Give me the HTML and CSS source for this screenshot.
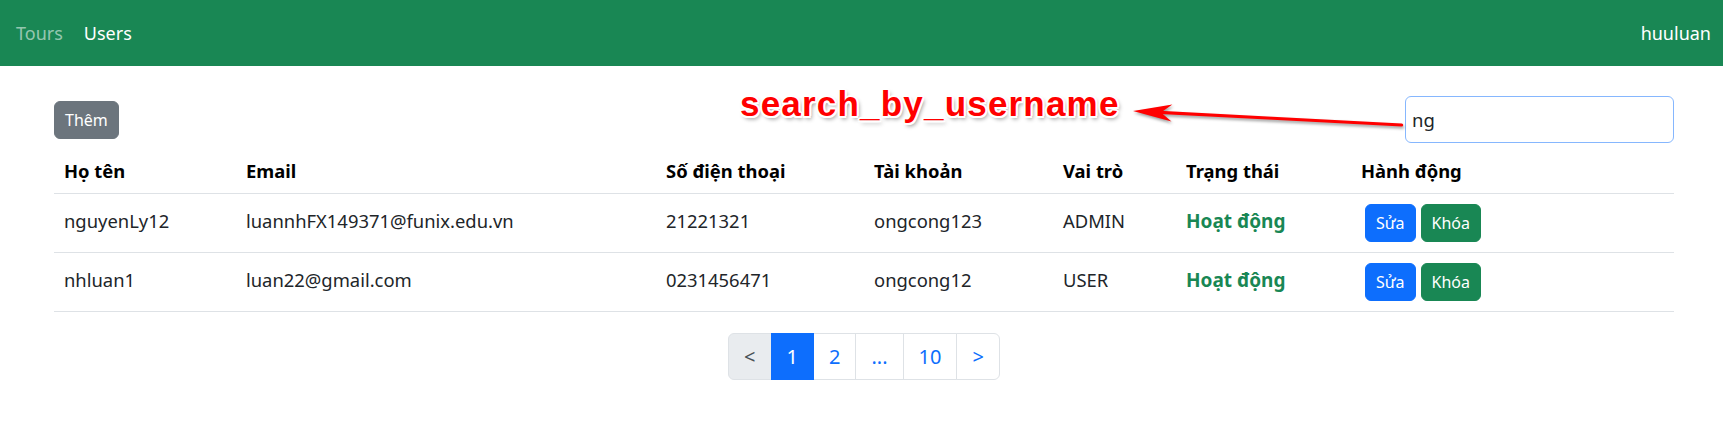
FILE: index.html
```html
<!DOCTYPE html>
<html lang="vi">
<head>
<meta charset="utf-8">
<title>Users</title>
<link rel="stylesheet" href="styles.css">
</head>
<body>
<nav class="navbar">
  <div class="nav-left">
    <a class="nav-link muted" href="#">Tours</a>
    <a class="nav-link" href="#">Users</a>
  </div>
  <div class="nav-user">huuluan</div>
</nav>

<main class="content">
  <div class="toolbar">
    <button class="btn btn-secondary">Thêm</button>
    <input class="search" type="text" value="ng">
  </div>

  <table class="table">
    <colgroup>
      <col class="c1"><col class="c2"><col class="c3"><col class="c4"><col class="c5"><col class="c6"><col class="c7">
    </colgroup>
    <thead>
      <tr>
        <th>Họ tên</th>
        <th>Email</th>
        <th>Số điện thoại</th>
        <th>Tài khoản</th>
        <th>Vai trò</th>
        <th>Trạng thái</th>
        <th>Hành động</th>
      </tr>
    </thead>
    <tbody>
      <tr>
        <td>nguyenLy12</td>
        <td>luannhFX149371@funix.edu.vn</td>
        <td>21221321</td>
        <td>ongcong123</td>
        <td>ADMIN</td>
        <td class="status">Hoạt động</td>
        <td><div class="actions"><button class="btn btn-primary">Sửa</button><button class="btn btn-success">Khóa</button></div></td>
      </tr>
      <tr>
        <td>nhluan1</td>
        <td>luan22@gmail.com</td>
        <td>0231456471</td>
        <td>ongcong12</td>
        <td>USER</td>
        <td class="status">Hoạt động</td>
        <td><div class="actions"><button class="btn btn-primary">Sửa</button><button class="btn btn-success">Khóa</button></div></td>
      </tr>
    </tbody>
  </table>

  <div class="pager-wrap">
    <ul class="pagination">
      <li class="page-item prev">&lt;</li>
      <li class="page-item active">1</li>
      <li class="page-item">2</li>
      <li class="page-item">...</li>
      <li class="page-item">10</li>
      <li class="page-item">&gt;</li>
    </ul>
  </div>
</main>

<div class="annotation">search_by_username</div>
<svg class="arrow" width="330" height="50" viewBox="1100 90 330 50" xmlns="http://www.w3.org/2000/svg">
  <g transform="rotate(2.98 1133 111)">
    <line x1="1150" y1="111" x2="1402" y2="111" stroke="#ff0000" stroke-width="3.2" stroke-linecap="round"/>
    <polygon points="1133,111 1172,102.5 1161,111 1172,119.5" fill="#ff0000"/>
  </g>
</svg>
</body>
</html>
```

FILE: styles.css
```css
* { box-sizing: border-box; }

body {
  margin: 0;
  font-family: "Noto Sans", "Open Sans", sans-serif;
  font-size: 16px;
  line-height: 24px;
  color: #212529;
  background: #fff;
}

.navbar {
  height: 66px;
  background: #198754;
  display: flex;
  align-items: center;
  justify-content: space-between;
  padding: 0 12px 0 16px;
  font-size: 18px;
  line-height: 28px;
}

.nav-left {
  display: flex;
  gap: 21px;
}

.nav-link {
  color: #fff;
  text-decoration: none;
}

.nav-link.muted {
  color: rgba(255, 255, 255, 0.55);
}

.nav-user {
  color: #fff;
}

.content {
  padding: 30px 49px 0 54px;
}

.toolbar {
  display: flex;
  justify-content: space-between;
  align-items: center;
}

.btn {
  font-family: inherit;
  font-size: 16px;
  line-height: 24px;
  padding: 6px 10px;
  border: 1px solid transparent;
  border-radius: 6px;
  color: #fff;
  cursor: pointer;
}

.btn-secondary { background: #6c757d; border-color: #6c757d; }
.btn-primary { background: #0d6efd; border-color: #0d6efd; }
.btn-success { background: #198754; border-color: #198754; }

.search {
  width: 269px;
  height: 47px;
  border: 1px solid #86b7fe;
  border-radius: 6px;
  padding: 0 6px;
  font-family: inherit;
  font-size: 18.5px;
  color: #212529;
  outline: none;
}

.table {
  width: 100%;
  border-collapse: collapse;
  table-layout: fixed;
  margin-top: 6px;
}

.c1 { width: 182px; }
.c2 { width: 420px; }
.c3 { width: 208px; }
.c4 { width: 189px; }
.c5 { width: 123px; }
.c6 { width: 175px; }
.c7 { width: 323px; }

.table th,
.table td {
  padding: 10px;
  text-align: left;
  vertical-align: middle;
  border-bottom: 1px solid #dee2e6;
  white-space: nowrap;
  font-size: 18.4px;
  line-height: 24px;
}

.table th {
  font-weight: 700;
  color: #000;
}

.table td {
  padding-bottom: 12px;
  padding-top: 8px;
}

.table td.status {
  color: #198754;
  font-weight: 700;
  font-size: 19px;
}

.actions {
  display: flex;
  gap: 5px;
  padding-left: 4px;
  padding-top: 2px;
}

.actions .btn {
  margin-bottom: -2px;
}

.pager-wrap {
  display: flex;
  justify-content: center;
  margin-top: 21px;
}

.pagination {
  display: flex;
  list-style: none;
  margin: 0;
  padding: 0;
}

.page-item {
  font-size: 20px;
  line-height: 29px;
  padding: 8px 15px;
  border: 1px solid #dee2e6;
  margin-left: -1px;
  color: #0d6efd;
  background: #fff;
}

.page-item:first-child {
  margin-left: 0;
  border-radius: 6px 0 0 6px;
}

.page-item:last-child {
  border-radius: 0 6px 6px 0;
}

.page-item.prev {
  background: #e9ecef;
  color: #495057;
}

.page-item.active {
  background: #0d6efd;
  border-color: #0d6efd;
  color: #fff;
  position: relative;
}

.annotation {
  position: absolute;
  left: 740px;
  top: 87px;
  font-family: "Liberation Sans", Arial, sans-serif;
  font-weight: 700;
  font-size: 35px;
  line-height: 34px;
  letter-spacing: 1.2px;
  color: #ff0000;
  text-shadow:
    -2px 0 0 #fff, 2px 0 0 #fff, 0 -2px 0 #fff, 0 2px 0 #fff,
    -1.5px -1.5px 0 #fff, 1.5px -1.5px 0 #fff, -1.5px 1.5px 0 #fff, 1.5px 1.5px 0 #fff,
    2px 3px 4px rgba(0, 0, 0, 0.45);
}

.arrow {
  position: absolute;
  left: 1100px;
  top: 90px;
  filter: drop-shadow(1px 2px 1.5px rgba(0, 0, 0, 0.4));
}
```
